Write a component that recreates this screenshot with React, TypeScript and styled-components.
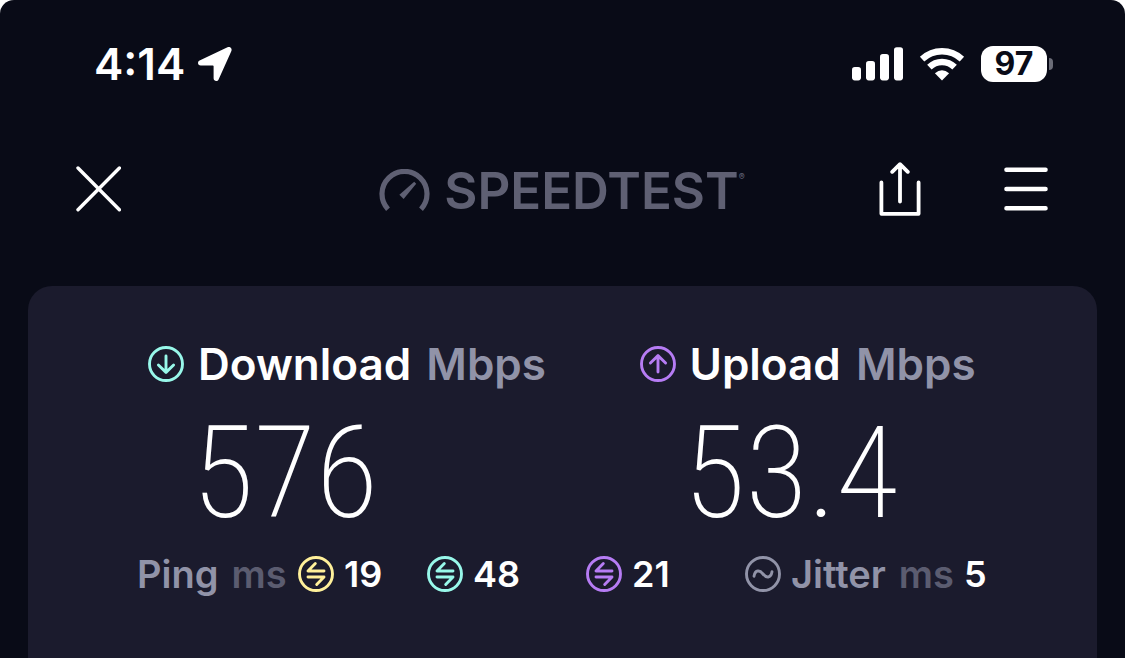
import React from "react";
import styled, { createGlobalStyle } from "styled-components";

const GlobalStyle = createGlobalStyle`
  *, *::before, *::after { box-sizing: border-box; }
  html { background: #ffffff; }
  body { margin: 0; font-family: "Inter", "Liberation Sans", sans-serif; color: #ffffff; }
  h1, h2, p { margin: 0; font-weight: inherit; font-size: inherit; }
  svg { display: block; flex: none; }
`;

const Screen = styled.div`
  display: flex;
  flex-direction: column;
  min-height: 100vh;
  background: #090b17;
  border-radius: 14px 14px 0 0;
  overflow: hidden;
`;

const StatusBar = styled.div`
  display: flex;
  align-items: center;
  justify-content: space-between;
  height: 128px;
  padding: 0 72px 0 94px;
`;

const StatusGroup = styled.div<{ $gap: number }>`
  display: flex;
  align-items: center;
  gap: ${(p) => p.$gap}px;
`;

const Clock = styled.time`
  font-size: 44px;
  line-height: 48px;
  font-weight: 600;
`;

const Battery = styled.div`
  display: flex;
  align-items: center;
  gap: 2px;
`;

const BatteryLevel = styled.span`
  width: 66px;
  height: 36px;
  border-radius: 12px;
  background: #ffffff;
  color: #090b17;
  font-size: 32px;
  line-height: 36px;
  font-weight: 700;
  text-align: center;
`;

const BatteryTip = styled.span`
  width: 4px;
  height: 12px;
  border-radius: 0 4px 4px 0;
  background: #6b6d78;
`;

const Header = styled.header`
  display: grid;
  grid-template-columns: 1fr auto 1fr;
  align-items: center;
  height: 122px;
  padding: 0 77px 0 76px;
`;

const IconButton = styled.button`
  display: block;
  padding: 0;
  border: 0;
  background: none;
  color: #ffffff;
  cursor: pointer;
`;

const Actions = styled.div`
  display: flex;
  align-items: center;
  justify-content: flex-end;
  gap: 83px;
`;

const Brand = styled.h1`
  display: flex;
  align-items: center;
  gap: 14px;
  padding-top: 4px;
  color: #5f6073;
`;

const BrandName = styled.span`
  display: flex;
  font-size: 51px;
  line-height: 56px;
  font-weight: 600;
`;

const Registered = styled.span`
  font-size: 9px;
  line-height: 28px;
`;

const Card = styled.main`
  flex: 1;
  margin: 36px 28px 0;
  padding: 50px 0 48px;
  border-radius: 24px 24px 0 0;
  background: #1b1b2d;
`;

const Results = styled.div`
  display: grid;
  grid-template-columns: 1fr 1fr;
  padding: 0 43px;
`;

const Result = styled.section`
  padding-left: 77px;
`;

const ResultTitle = styled.h2`
  display: flex;
  align-items: center;
  gap: 14px;
  font-size: 44px;
  line-height: 56px;
  font-weight: 600;
  white-space: nowrap;
`;

const Unit = styled.span`
  margin-left: 4px;
  color: #9193a8;
`;

const Speed = styled.p`
  padding: 6px 0 0 44px;
  font-family: "Roboto Condensed", "Roboto", sans-serif;
  font-size: 128px;
  line-height: 150px;
  font-weight: 200;
`;

const Latency = styled.div`
  display: grid;
  grid-template-columns: 161fr 129fr 159fr 159fr 242fr;
  align-items: center;
  padding: 0 110px 0 109px;
  font-size: 36px;
  line-height: 52px;
  font-weight: 600;
  white-space: nowrap;
`;

const Metric = styled.div`
  display: flex;
  align-items: center;
  gap: 10px;
`;

const MetricLabel = styled.div`
  display: flex;
  gap: 13px;
  color: #9193a8;
  font-size: 38px;
`;

const Faint = styled.span`
  color: #5b5c70;
`;

const teal = "#98f8ea";
const purple = "#b67cf4";
const yellow = "#fff09a";

function Badge({ color, children }: { color: string; children: React.ReactNode }) {
  return (
    <svg width="36" height="36" viewBox="0 0 36 36" fill="none" stroke={color} strokeWidth="2.9" strokeLinecap="round" strokeLinejoin="round" aria-hidden="true">
      <circle cx="18" cy="18" r="16.5" />
      {children}
    </svg>
  );
}

function SwapBadge({ color }: { color: string }) {
  return (
    <Badge color={color}>
      <path d="M17.3 7.6L10 15H26" />
      <path d="M10 21H26L18.7 28.4" />
    </Badge>
  );
}

export default function App() {
  return (
    <>
      <GlobalStyle />
      <Screen>
        <StatusBar>
          <StatusGroup $gap={12}>
            <Clock>4:14</Clock>
            <svg width="36" height="36" viewBox="0 0 36 36" fill="#fff" aria-hidden="true">
              <path d="M30.5 1.3C33 0.2 35.4 2.4 34.4 4.9L21.6 33.4C20.4 36 16.6 35.2 16.6 32.3V20.2Q16.6 19.4 15.8 19.4H3.7C0.8 19.4 0 15.7 2.6 14.4Z" />
            </svg>
          </StatusGroup>
          <StatusGroup $gap={16}>
            <svg width="51" height="34" viewBox="0 0 51 34" fill="#fff" aria-hidden="true">
              <rect x="0" y="20" width="9" height="13.4" rx="2.8" />
              <rect x="14" y="14" width="9" height="19.4" rx="2.8" />
              <rect x="28" y="7" width="9" height="26.4" rx="2.8" />
              <rect x="42" y="0.2" width="9" height="33.2" rx="2.8" />
            </svg>
            <svg width="46" height="34" viewBox="0 0 46 34" fill="none" stroke="#fff" strokeWidth="6.4" aria-hidden="true">
              <path d="M3.1 12.2A29 29 0 0 1 42.9 12.2" />
              <path d="M10.4 20.1A18 18 0 0 1 35.6 20.1" />
              <path d="M23 33.4L15.9 26.2Q23 20.4 30.1 26.2Z" fill="#fff" stroke="none" />
            </svg>
            <Battery>
              <BatteryLevel>97</BatteryLevel>
              <BatteryTip />
            </Battery>
          </StatusGroup>
        </StatusBar>

        <Header>
          <IconButton aria-label="Close" type="button">
            <svg width="45" height="46" viewBox="0 0 45 46" stroke="#fff" strokeWidth="3.4" strokeLinecap="round">
              <path d="M2 2L43.4 43.8M43.4 2L2 43.8" />
            </svg>
          </IconButton>
          <Brand>
            <svg width="51" height="44" viewBox="0 0 51 44" fill="none" aria-hidden="true">
              <path d="M9 40.2A22.5 22.5 0 1 1 42 40.2" stroke="currentColor" strokeWidth="5.2" />
              <path d="M35.2 12.8L37.2 14.8L24.6 30L20.4 25.8Z" fill="currentColor" />
            </svg>
            <BrandName>
              SPEEDTEST<Registered>®</Registered>
            </BrandName>
          </Brand>
          <Actions>
            <IconButton aria-label="Share" type="button">
              <svg width="42" height="54" viewBox="0 0 42 54" fill="none" stroke="#fff" strokeWidth="3.8" strokeLinecap="round" strokeLinejoin="round">
                <path d="M2.4 20.5V51.8H39.6V20.5" />
                <path d="M21 39.5V2.4M13.2 9.8L21 2.2L28.8 9.8" />
              </svg>
            </IconButton>
            <IconButton aria-label="Menu" type="button">
              <svg width="44" height="46" viewBox="0 0 44 46" stroke="#fff" strokeWidth="4.4" strokeLinecap="round">
                <path d="M2.4 3.8H41.6M2.4 23H41.6M2.4 42.2H41.6" />
              </svg>
            </IconButton>
          </Actions>
        </Header>

        <Card>
          <Results>
            <Result>
              <ResultTitle>
                <Badge color={teal}>
                  <path d="M18 10V26M10.4 19L18 26.4L25.6 19" />
                </Badge>
                <span>
                  Download <Unit>Mbps</Unit>
                </span>
              </ResultTitle>
              <Speed>576</Speed>
            </Result>
            <Result>
              <ResultTitle>
                <Badge color={purple}>
                  <path d="M18 26V10M10.4 17L18 9.6L25.6 17" />
                </Badge>
                <span>
                  Upload <Unit>Mbps</Unit>
                </span>
              </ResultTitle>
              <Speed>53.4</Speed>
            </Result>
          </Results>
          <Latency>
            <MetricLabel>
              <span>Ping</span>
              <Faint>ms</Faint>
            </MetricLabel>
            <Metric>
              <SwapBadge color={yellow} />
              <span>19</span>
            </Metric>
            <Metric>
              <SwapBadge color={teal} />
              <span>48</span>
            </Metric>
            <Metric>
              <SwapBadge color={purple} />
              <span>21</span>
            </Metric>
            <Metric>
              <Badge color="#9193a8">
                <path d="M9 20.2C10.2 13.6 14.8 13.8 18 18S25.8 22.4 27 15.8" />
              </Badge>
              <MetricLabel>
                <span>Jitter</span>
                <Faint>ms</Faint>
              </MetricLabel>
              <span>5</span>
            </Metric>
          </Latency>
        </Card>
      </Screen>
    </>
  );
}
